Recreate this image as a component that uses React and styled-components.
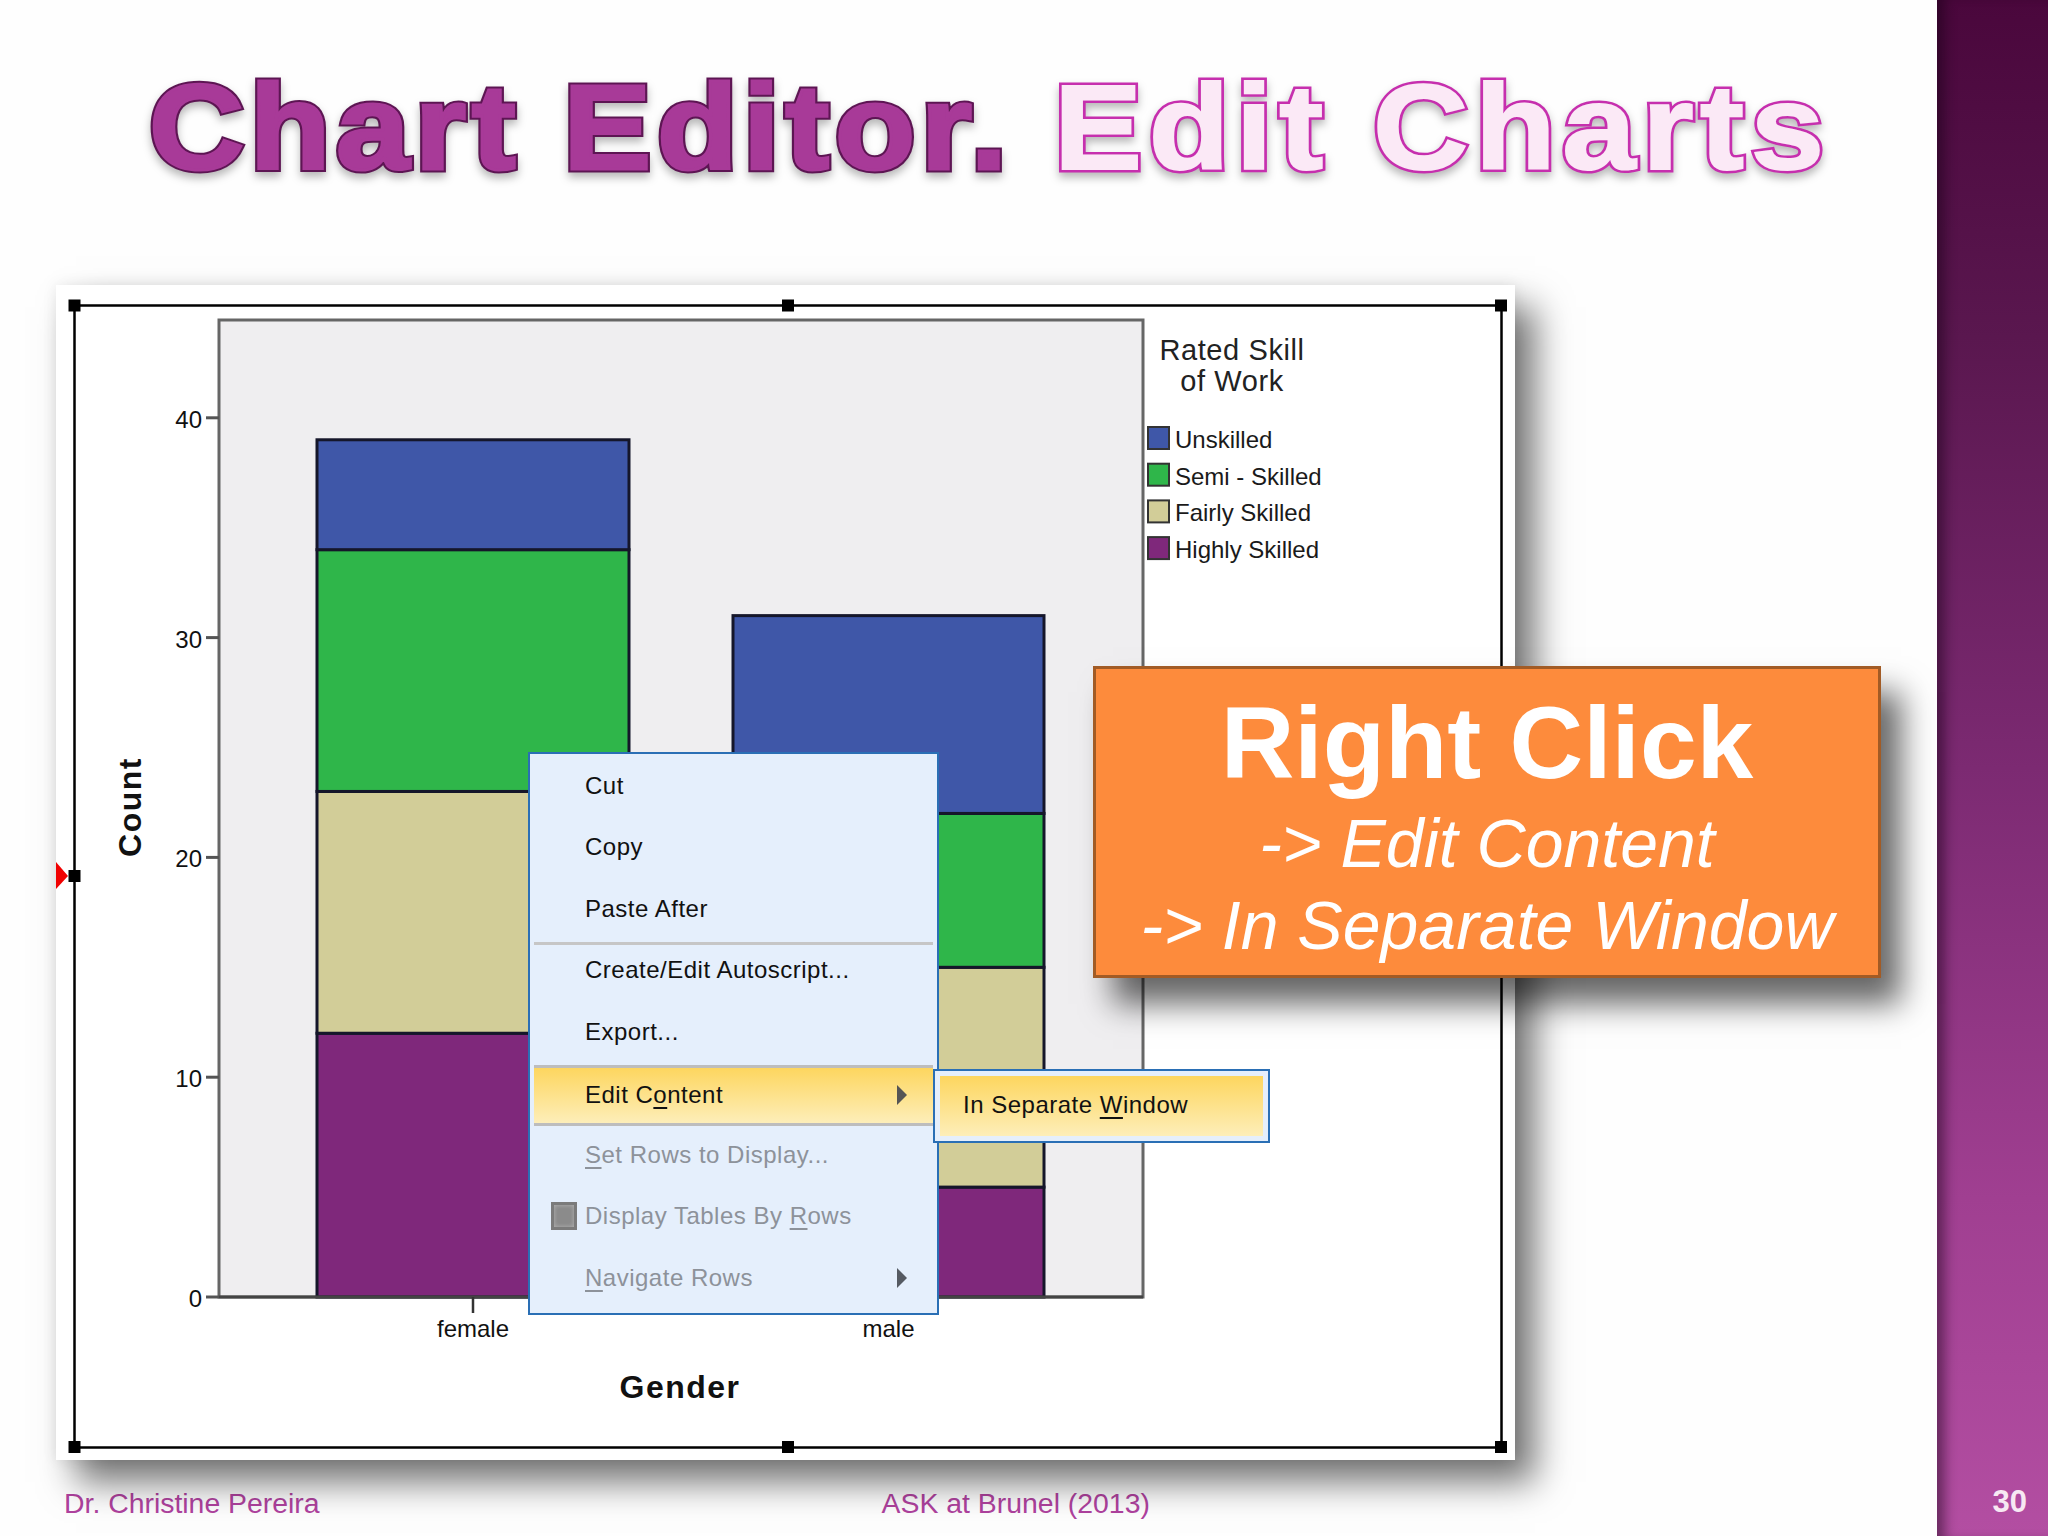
import React from 'react'
import styled, { createGlobalStyle } from 'styled-components'

const GlobalStyle = createGlobalStyle`
  html, body {
    margin: 0;
    padding: 0;
    background: #fefefe;
    font-family: "Liberation Sans", Arial, sans-serif;
  }
`

const Slide = styled.div`
  display: grid;
  grid-template-columns: 1937px 111px;
  width: 2048px;
  height: 1536px;
  overflow: hidden;
`
const Main = styled.main`
  position: relative;
  display: flex;
  flex-direction: column;
  padding-left: 56px;
  background: #fefefe;
`
const Title = styled.h1`
  display: flex;
  gap: 120px;
  height: 285px;
  margin: 0;
  padding: 54px 0 0 93px;
  box-sizing: border-box;
  font-size: 120px;
  line-height: 147px;
  font-weight: bold;
  white-space: nowrap;
`
// dark outline underneath, fill colour stroked on top so the letters read heavier
const TitleWord = styled.span`
  position: relative;
  letter-spacing: ${p => (p.$light ? '6px' : '5px')};
  color: ${p => (p.$light ? '#fbe9f6' : '#a83a98')};
  -webkit-text-stroke: ${p => (p.$light ? '7px #c62fae' : '7px #5d1553')};
  transform: scaleX(1.1);
  transform-origin: left center;
  filter: drop-shadow(0 5px 4px rgba(0, 0, 0, 0.28));

  &::after {
    content: attr(data-text);
    position: absolute;
    left: 0;
    top: 0;
    -webkit-text-stroke: ${p => (p.$light ? '2px #fbe9f6' : '3px #a83a98')};
  }
`
const Card = styled.section`
  position: relative;
  width: 1459px;
  height: 1175px;
  background: #fff;
  box-shadow: 20px 22px 34px rgba(0, 0, 0, 0.55), 0 0 14px rgba(0, 0, 0, 0.08);
`
const ChartSvg = styled.svg`
  display: block;
  font-family: "Liberation Sans", Arial, sans-serif;
`
const TickLabel = styled.text`
  font-size: 24px;
  fill: #111;
  text-anchor: ${p => p.$anchor || 'end'};
`
const AxisTitle = styled.text`
  font-size: 32px;
  font-weight: bold;
  letter-spacing: 1.5px;
  fill: #111;
  text-anchor: middle;
`
const LegendTitle = styled.text`
  font-size: 29px;
  letter-spacing: 0.6px;
  fill: #222;
  text-anchor: middle;
`
const LegendLabel = styled.text`
  font-size: 24px;
  fill: #1a1a1a;
`

const Menu = styled.ul`
  position: absolute;
  left: 472px;
  top: 467px;
  width: 403px;
  margin: 0;
  padding: 1px 2px 4px;
  list-style: none;
  background: #e5effc;
  border: 2px solid #2a6fb5;
  font-size: 24px;
  letter-spacing: 0.5px;
`
const Row = styled.li`
  position: relative;
  display: flex;
  align-items: center;
  height: 61.5px;
  box-sizing: border-box;
  margin: 0 2px;
  color: ${p => (p.$disabled ? '#8d929a' : '#111')};
  ${p => p.$active && `
    margin-top: 2px;
    margin-bottom: -2px;
    background: linear-gradient(#fdd65f, #fdeeb9);
    border-top: 3px solid #bdbdbd;
    border-bottom: 3px solid #bdbdbd;
  `}
  ${p => p.$separated && `
    &::before {
      content: '';
      position: absolute;
      left: 0;
      right: 0;
      top: 2px;
      height: 3px;
      background: #c6c6c6;
    }
  `}
`
const Lead = styled.span`
  display: flex;
  align-items: center;
  justify-content: center;
  flex: none;
  width: 51px;
`
const CheckBox = styled.i`
  display: block;
  width: 20px;
  height: 22px;
  margin-left: 8px;
  background: #8b8b8b;
  border: 3px solid #7b7b7b;
  box-shadow: inset 0 0 4px #b5b5b5;
`
const Arrow = styled.i`
  width: 0;
  height: 0;
  margin-left: auto;
  margin-right: 26px;
  border-left: 10px solid ${p => (p.$disabled ? '#555a62' : '#555')};
  border-top: 10px solid transparent;
  border-bottom: 10px solid transparent;
`
const Key = styled.span`
  text-decoration: underline;
  text-underline-offset: 4px;
`
const Submenu = styled.div`
  position: absolute;
  left: 100%;
  top: 1px;
  box-sizing: border-box;
  width: 337px;
  height: 74px;
  padding: 5px;
  background: #e5effc;
  border: 2px solid #2a6fb5;
`
const SubmenuItem = styled.div`
  display: flex;
  align-items: center;
  height: 100%;
  padding: 0 0 2px 23px;
  box-sizing: border-box;
  background: linear-gradient(#fdd65f, #fdeeb9);
  color: #111;
`

const Callout = styled.aside`
  position: absolute;
  left: 1093px;
  top: 666px;
  box-sizing: border-box;
  width: 788px;
  height: 312px;
  padding-top: 16px;
  background: #fd8b3c;
  border: 3px solid #a25b25;
  box-shadow: 20px 26px 30px rgba(0, 0, 0, 0.6);
  color: #fff;
  text-align: center;
`
const CalloutHead = styled.div`
  font-size: 102px;
  line-height: 117px;
  font-weight: bold;
`
const CalloutLine = styled.div`
  font-size: 68px;
  line-height: 82px;
  font-style: italic;
`

const Footer = styled.footer`
  display: flex;
  align-items: center;
  gap: 562px;
  height: 76px;
  padding: 10px 0 0 8px;
  box-sizing: border-box;
  font-size: 28.4px;
  color: #b0429f;
  white-space: nowrap;
`

const Sidebar = styled.div`
  display: flex;
  align-items: flex-end;
  justify-content: flex-end;
  padding: 0 21px 16px 0;
  background: linear-gradient(#4a073c 0%, #5a174f 22%, #7c2a72 50%, #a03f91 78%, #b34ea2 100%);
  box-shadow: inset 14px 0 12px -6px rgba(20, 0, 20, 0.45);
`
const PageNumber = styled.span`
  font-size: 31px;
  font-weight: bold;
  color: #f7e8f3;
`

const BASE_Y = 1012
const UNIT = 21.98
const colors = { unskilled: '#3f57a8', semi: '#2fb64a', fairly: '#d2cd98', highly: '#7f287b' }

const bars = [
  { x: 261, width: 312, label: 'female', stack: [['highly', 12], ['fairly', 11], ['semi', 11], ['unskilled', 5]] },
  { x: 677, width: 311, label: 'male', stack: [['highly', 5], ['fairly', 10], ['semi', 7], ['unskilled', 9]] },
]
const legend = [
  ['unskilled', 'Unskilled'],
  ['semi', 'Semi - Skilled'],
  ['fairly', 'Fairly Skilled'],
  ['highly', 'Highly Skilled'],
]
const handles = [
  [18.5, 20.5], [732, 20.5], [1445, 20.5], [18.5, 591], [18.5, 1162], [732, 1162], [1445, 1162],
]

function Segments({ bar }) {
  let total = 0
  return bar.stack.map(([key, count]) => {
    total += count
    const y = BASE_Y - total * UNIT
    return <rect key={key} x={bar.x} y={y} width={bar.width} height={count * UNIT} fill={colors[key]} stroke="#15162a" strokeWidth="3" />
  })
}

function Chart() {
  return (
    <ChartSvg width="1459" height="1175" viewBox="0 0 1459 1175">
      <rect x="18.5" y="20.5" width="1427" height="1142" fill="none" stroke="#000" strokeWidth="2.5" />
      {handles.map(([x, y]) => (
        <rect key={`${x}-${y}`} x={x - 6} y={y - 6} width="12" height="12" fill="#000" />
      ))}
      <polygon points="0,577 12,591 0,604" fill="#f00000" />

      <path d={`M163 ${BASE_Y} V35 H1087 V${BASE_Y} Z`} fill="#efeef0" stroke="#666" strokeWidth="3" />
      {[0, 10, 20, 30, 40].map(t => (
        <g key={t}>
          <line x1="150" x2="163" y1={BASE_Y - t * UNIT} y2={BASE_Y - t * UNIT} stroke="#555" strokeWidth="3" />
          <TickLabel x="146" y={BASE_Y - t * UNIT + 10}>{t}</TickLabel>
        </g>
      ))}
      {bars.map(bar => <Segments key={bar.label} bar={bar} />)}
      <line x1="163" x2="1087" y1={BASE_Y} y2={BASE_Y} stroke="#444" strokeWidth="3" />
      {bars.map(bar => (
        <g key={bar.label}>
          <line x1={bar.x + bar.width / 2} x2={bar.x + bar.width / 2} y1={BASE_Y} y2={BASE_Y + 16} stroke="#333" strokeWidth="2.5" />
          <TickLabel $anchor="middle" x={bar.x + bar.width / 2} y={BASE_Y + 40}>{bar.label}</TickLabel>
        </g>
      ))}
      <AxisTitle x="624" y="1113">Gender</AxisTitle>
      <AxisTitle transform="translate(85 522) rotate(-90)">Count</AxisTitle>

      <LegendTitle x="1176" y="75">Rated Skill</LegendTitle>
      <LegendTitle x="1176" y="106">of Work</LegendTitle>
      {legend.map(([key, label], i) => (
        <g key={key}>
          <rect x="1092" y={142 + i * 36.7} width="21" height="22" fill={colors[key]} stroke="#333" strokeWidth="2" />
          <LegendLabel x="1119" y={163 + i * 36.7}>{label}</LegendLabel>
        </g>
      ))}
    </ChartSvg>
  )
}

export default function App() {
  return (
    <Slide>
      <GlobalStyle />
      <Main>
        <Title>
          <TitleWord data-text="Chart Editor.">Chart Editor.</TitleWord>
          <TitleWord $light data-text="Edit Charts">Edit Charts</TitleWord>
        </Title>
        <Card>
          <Chart />
          <Menu>
            <Row>
              <Lead />Cut
            </Row>
            <Row>
              <Lead />Copy
            </Row>
            <Row>
              <Lead />Paste After
            </Row>
            <Row $separated>
              <Lead />Create/Edit Autoscript...
            </Row>
            <Row>
              <Lead />Export...
            </Row>
            <Row $active>
              <Lead />
              <span>Edit C<Key>o</Key>ntent</span>
              <Arrow />
              <Submenu>
                <SubmenuItem><span>In Separate <Key>W</Key>indow</span></SubmenuItem>
              </Submenu>
            </Row>
            <Row $disabled>
              <Lead />
              <span><Key>S</Key>et Rows to Display...</span>
            </Row>
            <Row $disabled>
              <Lead><CheckBox /></Lead>
              <span>Display Tables By <Key>R</Key>ows</span>
            </Row>
            <Row $disabled>
              <Lead />
              <span><Key>N</Key>avigate Rows</span>
              <Arrow $disabled />
            </Row>
          </Menu>
        </Card>
        <Footer>
          <span>Dr. Christine Pereira</span>
          <span>ASK at Brunel (2013)</span>
        </Footer>
        <Callout>
          <CalloutHead>Right Click</CalloutHead>
          <CalloutLine>-&gt; Edit Content</CalloutLine>
          <CalloutLine>-&gt; In Separate Window</CalloutLine>
        </Callout>
      </Main>
      <Sidebar>
        <PageNumber>30</PageNumber>
      </Sidebar>
    </Slide>
  )
}
